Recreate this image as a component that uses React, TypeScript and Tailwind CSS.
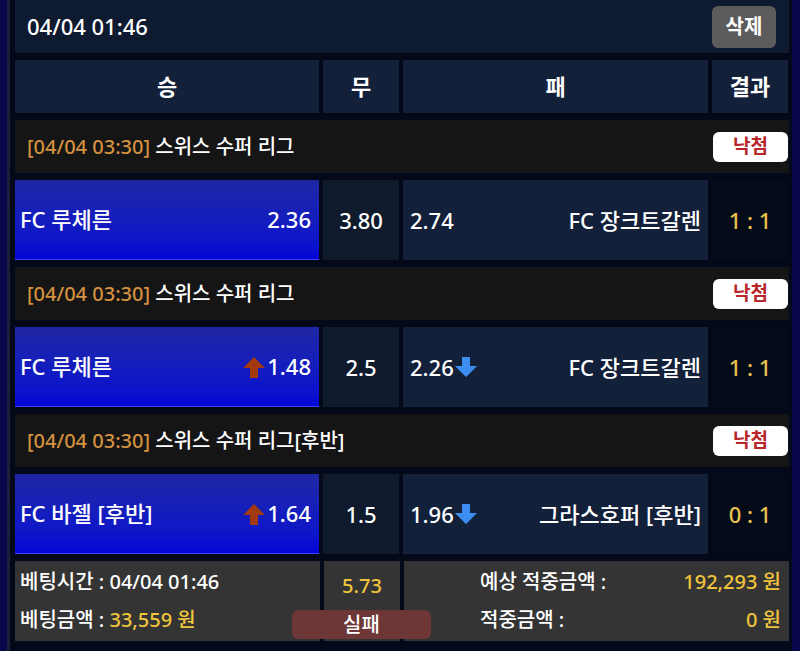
import React from "react";

const font = { fontFamily: '"Noto Sans", "Noto Sans CJK KR", sans-serif' };

function UpArrow() {
  return (
    <svg width="24" height="22" viewBox="0 0 24 22" className="shrink-0">
      <path d="M12 1 L23 12 L16 12 L16 22 L8 22 L8 12 L1 12 Z" fill="#a2390f" />
    </svg>
  );
}

function DownArrow() {
  return (
    <svg width="22" height="20" viewBox="0 0 22 20" className="shrink-0">
      <path d="M7 0 L15 0 L15 9 L22 9 L11 20 L0 9 L7 9 Z" fill="#3d8ef2" />
    </svg>
  );
}

type Match = {
  league: string;
  home: string;
  homeOdd: string;
  homeUp?: boolean;
  draw: string;
  awayOdd: string;
  awayDown?: boolean;
  away: string;
  score: string;
};

const matches: Match[] = [
  { league: "스위스 수퍼 리그", home: "FC 루체른", homeOdd: "2.36", draw: "3.80", awayOdd: "2.74", away: "FC 장크트갈렌", score: "1 : 1" },
  { league: "스위스 수퍼 리그", home: "FC 루체른", homeOdd: "1.48", homeUp: true, draw: "2.5", awayOdd: "2.26", awayDown: true, away: "FC 장크트갈렌", score: "1 : 1" },
  { league: "스위스 수퍼 리그[후반]", home: "FC 바젤 [후반]", homeOdd: "1.64", homeUp: true, draw: "1.5", awayOdd: "1.96", awayDown: true, away: "그라스호퍼 [후반]", score: "0 : 1" },
];

function LeagueRow({ league }: { league: string }) {
  return (
    <div className="h-[53px] bg-[#151515] flex items-center justify-between pl-[12px] pr-[1px]">
      <div className="text-[20px] font-medium text-white">
        <span className="text-[#d4913f]">[04/04 03:30]</span> {league}
      </div>
      <div className="w-[75px] h-[30px] bg-white rounded-[6px] flex items-center justify-center text-[#b8262a] font-bold text-[19px]">
        낙첨
      </div>
    </div>
  );
}

function MatchRow({ m }: { m: Match }) {
  return (
    <div className="h-[80px] grid grid-cols-[304px_76px_305px_76px] gap-[4px] text-[22px] font-medium">
      <div className="bg-gradient-to-b from-[#1f26a4] to-[#0505d6] border-b border-[#3a44ff] flex items-center justify-between pl-[5px] pr-[8px] text-white">
        <span>{m.home}</span>
        <span className="flex items-center gap-[1px]">
          {m.homeUp && <UpArrow />}
          <span>{m.homeOdd}</span>
        </span>
      </div>
      <div className="bg-[#0f1a2d] flex items-center justify-center text-white">{m.draw}</div>
      <div className="bg-[#13203a] flex items-center justify-between pl-[7px] pr-[7px] text-white">
        <span className="flex items-center gap-[1px]">
          <span>{m.awayOdd}</span>
          {m.awayDown && <DownArrow />}
        </span>
        <span>{m.away}</span>
      </div>
      <div className="bg-[#060b1a] flex items-center justify-center text-[#e8c24e]">{m.score}</div>
    </div>
  );
}

export default function App() {
  return (
    <div style={font} className="w-[800px] h-[651px] bg-[#08084a] overflow-hidden">
      <div className="ml-[7px] mr-[8px] h-full border-l-[3px] border-[#1b2038] bg-[#040919] pl-[5px] pr-[3px]">
        <div className="flex flex-col gap-[7px]">
          <div className="h-[53px] bg-[#0e1a2f] flex items-center justify-between pl-[12px] pr-[13px]">
            <span className="text-white text-[22px] font-medium">04/04 01:46</span>
            <div className="w-[64px] h-[42px] bg-[#5c5c5c] rounded-[6px] flex items-center justify-center text-white text-[20px] font-semibold">
              삭제
            </div>
          </div>
          <div className="h-[53px] grid grid-cols-[304px_76px_305px_76px] gap-[4px] text-white text-[22px] font-semibold">
            <div className="bg-[#13203a] flex items-center justify-center">승</div>
            <div className="bg-[#13203a] flex items-center justify-center">무</div>
            <div className="bg-[#13203a] flex items-center justify-center">패</div>
            <div className="bg-[#13203a] flex items-center justify-center">결과</div>
          </div>
          {matches.map((m, i) => (
            <React.Fragment key={i}>
              <LeagueRow league={m.league} />
              <MatchRow m={m} />
            </React.Fragment>
          ))}
          <div className="relative h-[80px] grid grid-cols-[305px_76px_385px] gap-[4px] text-[20px] font-medium">
            <div className="bg-[#343434] flex flex-col justify-center gap-[8px] pl-[5px] text-white">
              <div>베팅시간 : 04/04 01:46</div>
              <div>
                베팅금액 : <span className="text-[#f0c43c]">33,559 원</span>
              </div>
            </div>
            <div className="bg-[#343434] flex justify-center pt-[10px] text-[#f0c43c]">5.73</div>
            <div className="bg-[#343434] flex flex-col justify-center gap-[8px] pl-[76px] pr-[8px] text-white">
              <div className="flex justify-between">
                <span>예상 적중금액 :</span>
                <span className="text-[#f0c43c]">192,293 원</span>
              </div>
              <div className="flex justify-between">
                <span>적중금액 :</span>
                <span className="text-[#f0c43c]">0 원</span>
              </div>
            </div>
            <div className="absolute left-[277px] top-[49px] w-[139px] h-[29px] bg-[#6d3737] rounded-[6px] flex items-center justify-center text-white text-[20px]">
              실패
            </div>
          </div>
        </div>
      </div>
    </div>
  );
}
